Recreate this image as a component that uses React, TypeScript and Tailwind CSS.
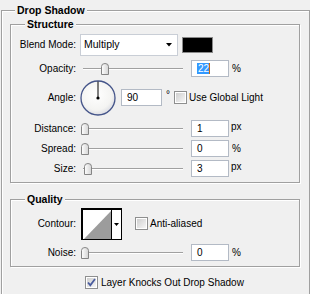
import React from "react";

const etched =
  "border border-[#a0a0a0] shadow-[inset_1px_1px_0_#ffffff,1px_1px_0_#ffffff]";

function Thumb() {
  return (
    <svg width="8" height="12" viewBox="0 0 8 12">
      <defs>
        <linearGradient id="thumbg" x1="0" x2="1" y1="0" y2="0">
          <stop offset="0" stopColor="#ffffff" />
          <stop offset="1" stopColor="#d4d4d4" />
        </linearGradient>
      </defs>
      <path
        d="M0.5 11.5V3.5Q0.5 0.5 4 0.5Q7.5 0.5 7.5 3.5V11.5Z"
        fill="url(#thumbg)"
        stroke="#858585"
      />
    </svg>
  );
}

function Slider({ pos }: { pos: number }) {
  return (
    <div className="relative w-[104px] h-[12px] shrink-0">
      <div className="absolute left-[3px] right-[1px] top-[5px] h-[2px] border-t border-[#a0a0a0] bg-white" />
      <div className="absolute top-0" style={{ left: pos }}>
        <Thumb />
      </div>
    </div>
  );
}

function Field({ children, w = "w-[38px]" }: { children: React.ReactNode; w?: string }) {
  return (
    <div
      className={`${w} h-[17px] shrink-0 bg-white border border-[#b3bac5] pl-[5px] flex items-center leading-none`}
    >
      {children}
    </div>
  );
}

function Label({ children }: { children: React.ReactNode }) {
  return <span className="w-[65px] shrink-0 text-right leading-none">{children}</span>;
}

function Check({ checked = false }: { checked?: boolean }) {
  return (
    <div className="w-[13px] h-[13px] shrink-0 border border-[#8e8f8f] bg-white p-[1px]">
      <div className="w-full h-full bg-gradient-to-br from-[#cfcfcf] to-[#f6f6f6] flex items-center justify-center">
        {checked && (
          <svg width="9" height="9" viewBox="0 0 9 9">
            <path
              d="M1 4.5L3.3 7.2L8 1"
              fill="none"
              stroke="#4a5c9e"
              strokeWidth="1.8"
            />
          </svg>
        )}
      </div>
    </div>
  );
}

function Header({ children, ml }: { children: React.ReactNode; ml: string }) {
  return (
    <div
      className={`${ml} -mt-[7px] h-[13px] w-fit px-[2px] bg-[#f0f0f0] font-bold text-[10.5px] leading-[13px]`}
    >
      {children}
    </div>
  );
}

function Dial() {
  return (
    <svg width="36" height="36" viewBox="0 0 36 36" className="shrink-0">
      <defs>
        <radialGradient id="dialg" cx="0.45" cy="0.4" r="0.6">
          <stop offset="0" stopColor="#ffffff" />
          <stop offset="0.75" stopColor="#f4f4f2" />
          <stop offset="1" stopColor="#dcdde3" />
        </radialGradient>
      </defs>
      <circle cx="18" cy="18" r="17" fill="url(#dialg)" stroke="#45558a" strokeWidth="1.3" />
      <line x1="18" y1="18" x2="18" y2="1.5" stroke="#000" strokeWidth="1" />
      <circle cx="18" cy="18" r="1.6" fill="#000" />
    </svg>
  );
}

export default function App() {
  return (
    <div className="w-[310px] h-[294px] overflow-hidden bg-[#f0f0f0] text-black text-[10px] font-['Liberation_Sans',Arial,sans-serif] pt-[10px] pl-[1px]">
      <div className={`${etched} w-[309px] h-[300px] flex flex-col`}>
        <Header ml="ml-[13px]">Drop Shadow</Header>

        {/* Structure */}
        <div className={`${etched} ml-[8px] mt-[7px] w-[290px] h-[159px] flex flex-col`}>
          <Header ml="ml-[14px]">Structure</Header>

          <div className="mt-[3px] h-[22px] flex items-center">
            <Label>Blend Mode:</Label>
            <div className="ml-[4px] w-[98px] h-[22px] bg-white border border-[#c9ced6] flex items-center pl-[3px] pr-[5px]">
              <span className="flex-1 text-[10.5px]">Multiply</span>
              <svg width="6" height="4" viewBox="0 0 6 4">
                <path d="M0 0H6L3 3.5Z" fill="#000" />
              </svg>
            </div>
            <div className="ml-[4px] w-[31px] h-[16px] bg-black border border-[#8a8a8a]" />
          </div>

          <div className="mt-[4px] h-[17px] flex items-center">
            <Label>Opacity:</Label>
            <div className="ml-[4px]">
              <Slider pos={21} />
            </div>
            <div className="ml-[7px]">
              <Field>
                <span className="bg-[#3399ff] text-white h-[11px] leading-[11px] pl-[1px]">22</span>
                <span className="w-[1px] h-[11px] bg-[#c46a12]" />
              </Field>
            </div>
            <span className="ml-[3px] leading-none">%</span>
          </div>

          <div className="mt-[3px] h-[35px] flex items-center">
            <Label>Angle:</Label>
            <div className="ml-[4px] flex items-center">
              <Dial />
            </div>
            <div className="ml-[5px]">
              <Field w="w-[41px]">90</Field>
            </div>
            <span className="w-[12px] pl-[4px] -mt-[6px] leading-none">°</span>
            <Check />
            <span className="ml-[2px] leading-none">Use Global Light</span>
          </div>

          <div className="mt-[5px] h-[17px] flex items-center">
            <Label>Distance:</Label>
            <div className="ml-[4px]">
              <Slider pos={1} />
            </div>
            <div className="ml-[7px]">
              <Field>1</Field>
            </div>
            <span className="ml-[2px] -mt-[4px] leading-none">px</span>
          </div>

          <div className="mt-[3px] h-[17px] flex items-center">
            <Label>Spread:</Label>
            <div className="ml-[4px]">
              <Slider pos={1} />
            </div>
            <div className="ml-[7px]">
              <Field>0</Field>
            </div>
            <span className="ml-[3px] leading-none">%</span>
          </div>

          <div className="mt-[3px] h-[17px] flex items-center">
            <Label>Size:</Label>
            <div className="ml-[4px]">
              <Slider pos={4} />
            </div>
            <div className="ml-[7px]">
              <Field>3</Field>
            </div>
            <span className="ml-[2px] -mt-[4px] leading-none">px</span>
          </div>
        </div>

        {/* Quality */}
        <div className={`${etched} ml-[8px] mt-[16px] w-[290px] h-[68px] flex flex-col`}>
          <Header ml="ml-[14px]">Quality</Header>

          <div className="mt-[2px] h-[32px] flex items-center">
            <Label>Contour:</Label>
            <div className="ml-[5px] w-[41px] h-[32px] bg-white border-t-2 border-l-2 border-r border-b border-black flex">
              <div className="w-[28px] h-full p-[1px]">
                <svg width="27" height="28" viewBox="0 0 27 28">
                  <polygon points="0,28 27,0 27,28" fill="#9c9c9c" />
                </svg>
              </div>
              <div className="w-[1px] h-full bg-black" />
              <div className="flex-1 flex items-center justify-center">
                <svg width="5" height="3" viewBox="0 0 5 3">
                  <path d="M0 0H5L2.5 3Z" fill="#000" />
                </svg>
              </div>
            </div>
            <div className="ml-[13px] -mt-[1px]">
              <Check />
            </div>
            <span className="ml-[2px] leading-none">Anti-aliased</span>
          </div>

          <div className="mt-[4px] h-[17px] flex items-center">
            <Label>Noise:</Label>
            <div className="ml-[4px]">
              <Slider pos={1} />
            </div>
            <div className="ml-[7px]">
              <Field>0</Field>
            </div>
            <span className="ml-[3px] leading-none">%</span>
          </div>
        </div>

        <div className="mt-[9px] ml-[83px] h-[13px] flex items-center">
          <Check checked />
          <span className="ml-[3px] leading-none">Layer Knocks Out Drop Shadow</span>
        </div>
      </div>
    </div>
  );
}
